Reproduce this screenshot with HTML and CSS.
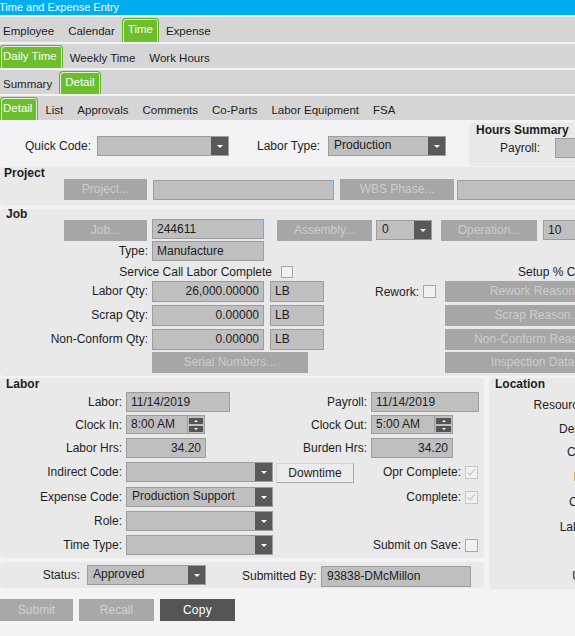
FILE: index.html
```html
<!DOCTYPE html>
<html>
<head>
<meta charset="utf-8">
<title>Time and Expense Entry</title>
<link rel="stylesheet" href="styles.css">
</head>
<body>
<div class="app">
  <div class="titlebar">Time and Expense Entry</div>
  <nav class="tabrow r1"><span class="tab">Employee</span><span class="tab">Calendar</span><span class="tab active">Time</span><span class="tab">Expense</span></nav>
  <nav class="tabrow"><span class="tab active">Daily Time</span><span class="tab">Weekly Time</span><span class="tab">Work Hours</span></nav>
  <nav class="tabrow"><span class="tab">Summary</span><span class="tab active">Detail</span></nav>
  <nav class="tabrow"><span class="tab active">Detail</span><span class="tab">List</span><span class="tab">Approvals</span><span class="tab">Comments</span><span class="tab">Co-Parts</span><span class="tab">Labor Equipment</span><span class="tab">FSA</span></nav>

  <section class="header">
    <span class="hlabel ql">Quick Code:</span>
    <div class="combo qc"><span class="val"></span><span class="dd"></span></div>
    <span class="hlabel lt">Labor Type:</span>
    <div class="combo ltc"><span class="val">Production</span><span class="dd"></span></div>
    <div class="panel hours">
      <div class="ph hph">Hours Summary</div>
      <div class="hrow"><span class="hpl">Payroll:</span><div class="inp hpay"></div></div>
    </div>
  </section>

  <section class="panel project">
    <div class="ph">Project</div>
    <div class="prow">
      <div class="btn pbtn">Project...</div>
      <div class="inp pinp flag"></div>
      <div class="btn wbtn">WBS Phase...</div>
      <div class="inp winp"></div>
    </div>
  </section>

  <section class="panel job">
    <div class="ph jph">Job</div>
    <div class="jrow ra">
      <div class="btn jbtn">Job...</div>
      <div class="inp jinp flag">244611</div>
      <div class="btn abtn">Assembly...</div>
      <div class="combo acmb"><span class="val">0</span><span class="dd"></span></div>
      <div class="btn obtn">Operation...</div>
      <div class="inp oinp">10</div>
    </div>
    <div class="jrow rb">
      <span class="jl">Type:</span>
      <div class="inp tinp">Manufacture</div>
    </div>
    <div class="jrow rc">
      <span class="scl">Service Call Labor Complete</span>
      <span class="cb sccb"></span>
      <span class="setup">Setup % Complete:</span>
    </div>
    <div class="jgrid">
      <span class="jl">Labor Qty:</span>
      <div class="inp qty">26,000.00000</div>
      <div class="inp uom">LB</div>
      <div class="rw"><span>Rework:</span><span class="cb"></span></div>
      <div class="btn rbtn">Rework Reason...</div>

      <span class="jl">Scrap Qty:</span>
      <div class="inp qty">0.00000</div>
      <div class="inp uom">LB</div>
      <div></div>
      <div class="btn rbtn">Scrap Reason...</div>

      <span class="jl">Non-Conform Qty:</span>
      <div class="inp qty">0.00000</div>
      <div class="inp uom">LB</div>
      <div></div>
      <div class="btn rbtn">Non-Conform Reason...</div>

      <div></div>
      <div class="btn serial">Serial Numbers...</div>
      <div></div>
      <div class="btn rbtn">Inspection Data...</div>
    </div>
  </section>

  <div class="lower">
    <div class="leftcol">
      <section class="panel labor">
        <div class="ph lph">Labor</div>
        <div class="lgrid">
          <span class="ll">Labor:</span>
          <div class="cell"><div class="inp w104">11/14/2019</div></div>
          <span class="ll">Payroll:</span>
          <div class="cell"><div class="inp w108">11/14/2019</div></div>

          <span class="ll">Clock In:</span>
          <div class="cell"><div class="inp tm w62">8:00 AM</div><div class="spin"><span class="sb up"></span><span class="sb dn"></span></div></div>
          <span class="ll">Clock Out:</span>
          <div class="cell"><div class="inp tm w64">5:00 AM</div><div class="spin s18"><span class="sb up"></span><span class="sb dn"></span></div></div>

          <span class="ll">Labor Hrs:</span>
          <div class="cell"><div class="inp num w80">34.20</div></div>
          <span class="ll">Burden Hrs:</span>
          <div class="cell"><div class="inp num w82">34.20</div></div>

          <span class="ll">Indirect Code:</span>
          <div class="cell"><div class="combo w147"><span class="val"></span><span class="dd"></span></div></div>
          <div class="cell"><div class="plainbtn">Downtime</div></div>
          <div class="chk"><span>Opr Complete:</span><span class="cb checked"><svg viewBox="0 0 13 13" width="11" height="11"><path d="M2 6.5 L4.8 9.3 L10.5 2.8" fill="none" stroke="#c3c3c3" stroke-width="1.3"/></svg></span></div>

          <span class="ll">Expense Code:</span>
          <div class="cell"><div class="combo w147"><span class="val">Production Support</span><span class="dd"></span></div></div>
          <div></div>
          <div class="chk"><span>Complete:</span><span class="cb checked"><svg viewBox="0 0 13 13" width="11" height="11"><path d="M2 6.5 L4.8 9.3 L10.5 2.8" fill="none" stroke="#c3c3c3" stroke-width="1.3"/></svg></span></div>

          <span class="ll">Role:</span>
          <div class="cell"><div class="combo w147"><span class="val"></span><span class="dd"></span></div></div>
          <div></div>
          <div></div>

          <span class="ll">Time Type:</span>
          <div class="cell"><div class="combo w147"><span class="val"></span><span class="dd"></span></div></div>
          <div></div>
          <div class="chk"><span>Submit on Save:</span><span class="cb"></span></div>
        </div>
      </section>
      <section class="panel status">
        <span class="stl">Status:</span>
        <div class="combo stc"><span class="val">Approved</span><span class="dd"></span></div>
        <span class="sbl">Submitted By:</span>
        <div class="inp sbi">93838-DMcMillon</div>
      </section>
    </div>
    <section class="panel location">
      <div class="ph lph">Location</div>
      <div class="locrows">
        <span class="loc">Resource Group:</span>
        <span class="loc">Department:</span>
        <span class="loc">Crew Size:</span>
        <span class="loc">Foreman:</span>
        <span class="loc">Cell Code:</span>
        <span class="loc">Labor Entry:</span>
        <span class="loc"></span>
        <span class="loc">Unit Cost:</span>
      </div>
    </section>
  </div>

  <div class="actions">
    <div class="abtn2 dis w73">Submit</div>
    <div class="abtn2 dis w75">Recall</div>
    <div class="abtn2 dark w75">Copy</div>
  </div>
</div>
</body>
</html>
```

FILE: styles.css
```css
* { box-sizing: border-box; margin: 0; padding: 0; }
html, body { width: 575px; height: 636px; overflow: hidden; }
body {
  background: #f3f3f5;
  font-family: "Liberation Sans", Arial, sans-serif;
  font-size: 12px;
  color: #1d1d24;
}
.app { width: 720px; }

/* title + tabs */
.titlebar {
  height: 15px; line-height: 15px;
  background: #00adef; color: #fff;
  font-size: 11px; text-indent: -1px; white-space: nowrap;
}
.tabrow {
  display: flex; align-items: flex-start;
  height: 24px; margin-top: 2px;
  background: #d5d5d5; font-size: 11.5px;
}
.tabrow.r1 { height: 25px; }
.tab { flex: none; padding: 5px 7px 0; line-height: 19px; white-space: nowrap; }
.tab:first-child { padding-left: 3px; }
.tab.active {
  height: calc(100% - 1px); margin-top: 1px;
  padding: 1px 5px 0;
  background: #6cbe2d; color: #fff;
  border: 1px solid #62b427; border-bottom: 0;
  border-radius: 4px 4px 0 0;
  box-shadow: inset 1px 1px 0 #e2f1d6, inset -1px 0 0 #e2f1d6;
}
.tab.active:first-child { padding-left: 2px; }

/* generic controls */
.inp {
  flex: none;
  height: 20px; background: #bfbfbf; border: 1px solid #9d9d9d;
  padding: 0 4px; line-height: 18px; white-space: nowrap; overflow: hidden;
  position: relative;
}
.inp.flag::after {
  content: ""; position: absolute; top: 0; right: 0;
  border-top: 7px solid #a8c3e0; border-left: 7px solid transparent;
}
.combo {
  flex: none;
  display: flex; height: 20px; background: #bfbfbf; border: 1px solid #9d9d9d;
}
.combo .val { flex: 1; padding-left: 5px; line-height: 17px; white-space: nowrap; overflow: hidden; }
.combo .dd {
  flex: none; width: 17px; background: #595959;
  display: flex; align-items: center; justify-content: center;
}
.combo .dd::after {
  content: ""; width: 0; height: 0;
  border-left: 3px solid transparent; border-right: 3px solid transparent;
  border-top: 3px solid #fff;
}
.btn {
  flex: none;
  height: 21px; line-height: 21px; text-align: center;
  background: #a6a6a6; color: #cdcdcd; white-space: nowrap; overflow: hidden;
}
.cb {
  flex: none;
  width: 13px; height: 13px; background: #f1f1f1; border: 1px solid #a7a7a7;
  display: flex; align-items: center; justify-content: center;
}
.cb.checked { border-color: #c6c6c6; }

.panel { background: #e9e9e9; border-radius: 4px; }
.ph { font-weight: bold; padding-left: 4px; line-height: 12px; height: 12px; white-space: nowrap; }

/* header */
.header { display: flex; align-items: flex-start; height: 46px; }
.header > * { flex: none; }
.hlabel { margin-top: 16px; line-height: 20px; white-space: nowrap; }
.ql { margin-left: 25px; width: 72px; }
.qc { margin-top: 16px; width: 132px; }
.lt { margin-left: 28px; width: 71px; }
.ltc { margin-top: 16px; width: 118px; }
.hours { margin-left: 23px; margin-top: 3px; width: 200px; height: 43px; }
.hph { padding-left: 7px; line-height: 14px; height: 14px; }
.hrow { display: flex; align-items: center; margin-top: 1px; height: 20px; }
.hpl { flex: none; margin-left: 31px; width: 55px; }
.hpay { width: 80px; }

/* project */
.project { margin-top: 1px; height: 38px; }
.prow { display: flex; height: 21px; }
.pbtn { margin-left: 64px; width: 83px; }
.pinp { margin-left: 6px; margin-top: 1px; width: 181px; }
.wbtn { margin-left: 6px; width: 114px; }
.winp { margin-left: 3px; margin-top: 1px; width: 200px; }

/* job */
.job { margin-top: 4px; height: 167px; }
.jph { padding-left: 6px; line-height: 10px; height: 10px; }
.jrow { display: flex; align-items: flex-start; }
.jrow > * { flex: none; }
.ra { height: 22px; }
.jbtn { margin-left: 64px; margin-top: 1px; width: 83px; }
.jinp { margin-left: 5px; width: 112px; }
.abtn { margin-left: 13px; margin-top: 1px; width: 95px; }
.acmb { margin-left: 4px; margin-top: 1px; width: 56px; }
.obtn { margin-left: 9px; margin-top: 1px; width: 96px; }
.oinp { margin-left: 6px; margin-top: 1px; width: 100px; }
.rb { height: 21px; }
.jl { width: 152px; padding-right: 4px; text-align: right; line-height: 20px; white-space: nowrap; }
.tinp { width: 112px; }
.rc { height: 19px; align-items: center; }
.scl { width: 272px; text-align: right; white-space: nowrap; }
.sccb { margin-left: 9px; width: 12px; height: 12px; }
.setup { margin-left: 225px; white-space: nowrap; }

.jgrid {
  display: grid;
  grid-template-columns: 152px 118px 54px 121px 185px;
  grid-template-rows: 24px 24px 23px 22px;
  align-items: start;
}
.jgrid .jl { line-height: 21px; }
.qty { width: 112px; height: 21px; line-height: 19px; text-align: right; }
.uom { width: 54px; height: 21px; line-height: 19px; }
.rw { height: 21px; display: flex; align-items: center; justify-content: flex-end; padding-right: 9px; gap: 4px; }
.rbtn { width: 185px; }
.serial { width: 156px; grid-column: span 2; }

/* lower */
.lower { display: flex; gap: 5px; margin-top: 2px; }
.leftcol { width: 484px; flex: none; }
.labor { height: 180px; }
.lph { padding-left: 6px; height: 14px; }
.lgrid {
  display: grid;
  grid-template-columns: 126px 150px 95px 113px;
  grid-template-rows: 23px 23px 24px 25px 24px 24px 20px;
  align-items: start;
}
.ll { padding-right: 4px; text-align: right; line-height: 20px; white-space: nowrap; }
.cell { display: flex; }
.w104 { width: 104px; }
.w108 { width: 108px; }
.w62 { width: 62px; }
.w64 { width: 64px; }
.w80 { width: 80px; }
.w82 { width: 82px; }
.w147 { width: 147px; }
.num { text-align: right; }
.tm { height: 19px; line-height: 17px; }
.spin {
  flex: none;
  width: 17px; height: 19px; background: #bfbfbf;
  border: 1px solid #9d9d9d; border-left: 0;
  display: flex; flex-direction: column; justify-content: space-between;
  padding: 2px 1px 1px;
}
.spin.s18 { width: 18px; }
.sb { height: 6px; background: #555; display: flex; align-items: center; justify-content: center; }
.sb.up::after {
  content: ""; border-left: 2px solid transparent; border-right: 2px solid transparent;
  border-bottom: 2px solid #fff;
}
.sb.dn::after {
  content: ""; border-left: 2px solid transparent; border-right: 2px solid transparent;
  border-top: 2px solid #fff;
}
.plainbtn {
  flex: none;
  width: 78px; height: 20px; margin-top: 1px; line-height: 18px; text-align: center;
  background: #ececec; border: 1px solid #d2d2d2; border-right-color: #a9a9a9; border-bottom-color: #a9a9a9;
}
.chk {
  height: 20px; display: flex; align-items: center; justify-content: flex-end;
  gap: 4px; padding-right: 6px; white-space: nowrap;
}

.status { margin-top: 4px; height: 26px; display: flex; align-items: flex-start; }
.status > * { flex: none; }
.stl { width: 87px; padding-right: 7px; text-align: right; line-height: 20px; margin-top: 3px; }
.stc { width: 119px; margin-top: 3px; }
.sbl { margin-left: 36px; width: 79px; line-height: 20px; margin-top: 4px; white-space: nowrap; }
.sbi { width: 150px; height: 21px; line-height: 19px; margin-top: 4px; padding-left: 5px; }

.location { flex: 1; height: 211px; }
.location .lph { height: 15px; }
.locrows {
  display: grid; width: 136px;
  grid-template-rows: 24px 23px 25px 25px 25px 25px 24px 24px;
}
.loc { text-align: right; line-height: 24px; white-space: nowrap; }

/* actions */
.actions { display: flex; gap: 6px; margin-top: 10px; }
.actions > * { flex: none; }
.abtn2 { height: 22px; line-height: 22px; text-align: center; }
.abtn2.dis { background: #a8a8a8; color: #d2d2d2; }
.abtn2.dark { background: #555555; color: #fff; letter-spacing: 0.3px; }
.w73 { width: 73px; }
.w75 { width: 75px; }
```
